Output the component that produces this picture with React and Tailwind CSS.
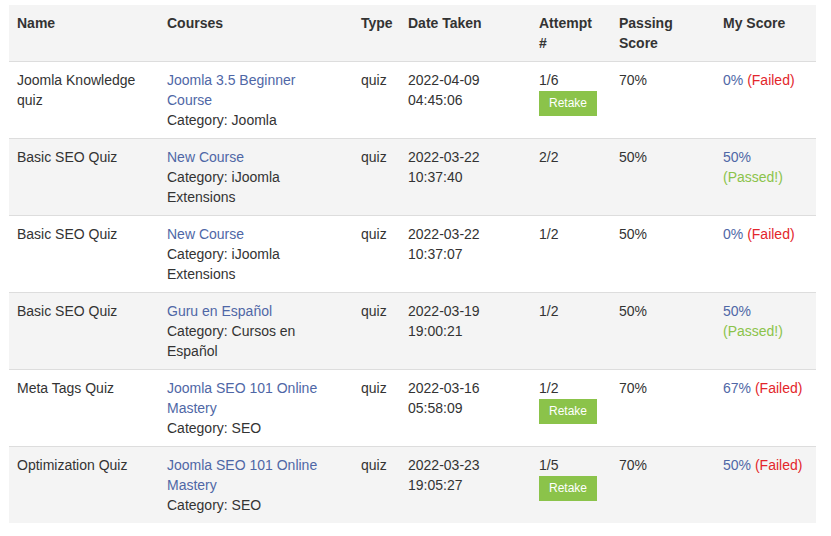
import React from "react";

const rows = [
  {
    name: "Joomla Knowledge quiz",
    course: "Joomla 3.5 Beginner Course",
    category: "Joomla",
    date: "2022-04-09",
    time: "04:45:06",
    attempt: "1/6",
    retake: true,
    passing: "70%",
    score: "0%",
    passed: false,
  },
  {
    name: "Basic SEO Quiz",
    course: "New Course",
    category: "iJoomla Extensions",
    date: "2022-03-22",
    time: "10:37:40",
    attempt: "2/2",
    passing: "50%",
    score: "50%",
    passed: true,
  },
  {
    name: "Basic SEO Quiz",
    course: "New Course",
    category: "iJoomla Extensions",
    date: "2022-03-22",
    time: "10:37:07",
    attempt: "1/2",
    passing: "50%",
    score: "0%",
    passed: false,
  },
  {
    name: "Basic SEO Quiz",
    course: "Guru en Español",
    category: "Cursos en Español",
    date: "2022-03-19",
    time: "19:00:21",
    attempt: "1/2",
    passing: "50%",
    score: "50%",
    passed: true,
  },
  {
    name: "Meta Tags Quiz",
    course: "Joomla SEO 101 Online Mastery",
    category: "SEO",
    date: "2022-03-16",
    time: "05:58:09",
    attempt: "1/2",
    retake: true,
    passing: "70%",
    score: "67%",
    passed: false,
  },
  {
    name: "Optimization Quiz",
    course: "Joomla SEO 101 Online Mastery",
    category: "SEO",
    date: "2022-03-23",
    time: "19:05:27",
    attempt: "1/5",
    retake: true,
    passing: "70%",
    score: "50%",
    passed: false,
  },
];

function App() {
  return (
    <div className="bg-white pt-[5px] pl-[9px] font-['Liberation_Sans',Arial,sans-serif] text-[14px] leading-[20px] text-[#333]">
      <table className="table-fixed border-collapse w-[807px]">
        <colgroup>
          <col className="w-[150px]" />
          <col className="w-[194px]" />
          <col className="w-[47px]" />
          <col className="w-[131px]" />
          <col className="w-[80px]" />
          <col className="w-[104px]" />
          <col className="w-[101px]" />
        </colgroup>
        <thead>
          <tr className="bg-[#f4f4f4] h-[56px] align-top text-left">
            <th className="px-2 pt-[8px] font-bold">Name</th>
            <th className="px-2 pt-[8px] font-bold">Courses</th>
            <th className="px-2 pt-[8px] font-bold">Type</th>
            <th className="px-2 pt-[8px] font-bold">Date Taken</th>
            <th className="px-2 pt-[8px] font-bold">Attempt #</th>
            <th className="px-2 pt-[8px] font-bold">Passing Score</th>
            <th className="px-2 pt-[8px] font-bold">My Score</th>
          </tr>
        </thead>
        <tbody>
          {rows.map((row, i) => (
            <tr
              key={i}
              className={`h-[77px] align-top border-t border-[#dddddd] ${
                i % 2 === 1 ? "bg-[#f4f4f4]" : "bg-white"
              }`}
            >
              <td className="px-2 py-2">{row.name}</td>
              <td className="pl-2 pr-4 py-2">
                <div className="text-[#4f67a6]">{row.course}</div>
                <div>Category: {row.category}</div>
              </td>
              <td className="px-2 py-2">quiz</td>
              <td className="px-2 py-2">
                {row.date}
                <br />
                {row.time}
              </td>
              <td className="px-2 py-2">
                <div>{row.attempt}</div>
                {row.retake && (
                  <button className="mt-[1px] w-[58px] h-[25px] bg-[#8bc34a] text-white text-[12px] leading-[25px]">
                    Retake
                  </button>
                )}
              </td>
              <td className="px-2 py-2">{row.passing}</td>
              <td className="px-2 py-2">
                <span className="text-[#4f67a6]">{row.score}</span>{" "}
                <span className={row.passed ? "text-[#8bc34a]" : "text-[#e3262b]"}>
                  {row.passed ? "(Passed!)" : "(Failed)"}
                </span>
              </td>
            </tr>
          ))}
        </tbody>
      </table>
    </div>
  );
}

export default App;
